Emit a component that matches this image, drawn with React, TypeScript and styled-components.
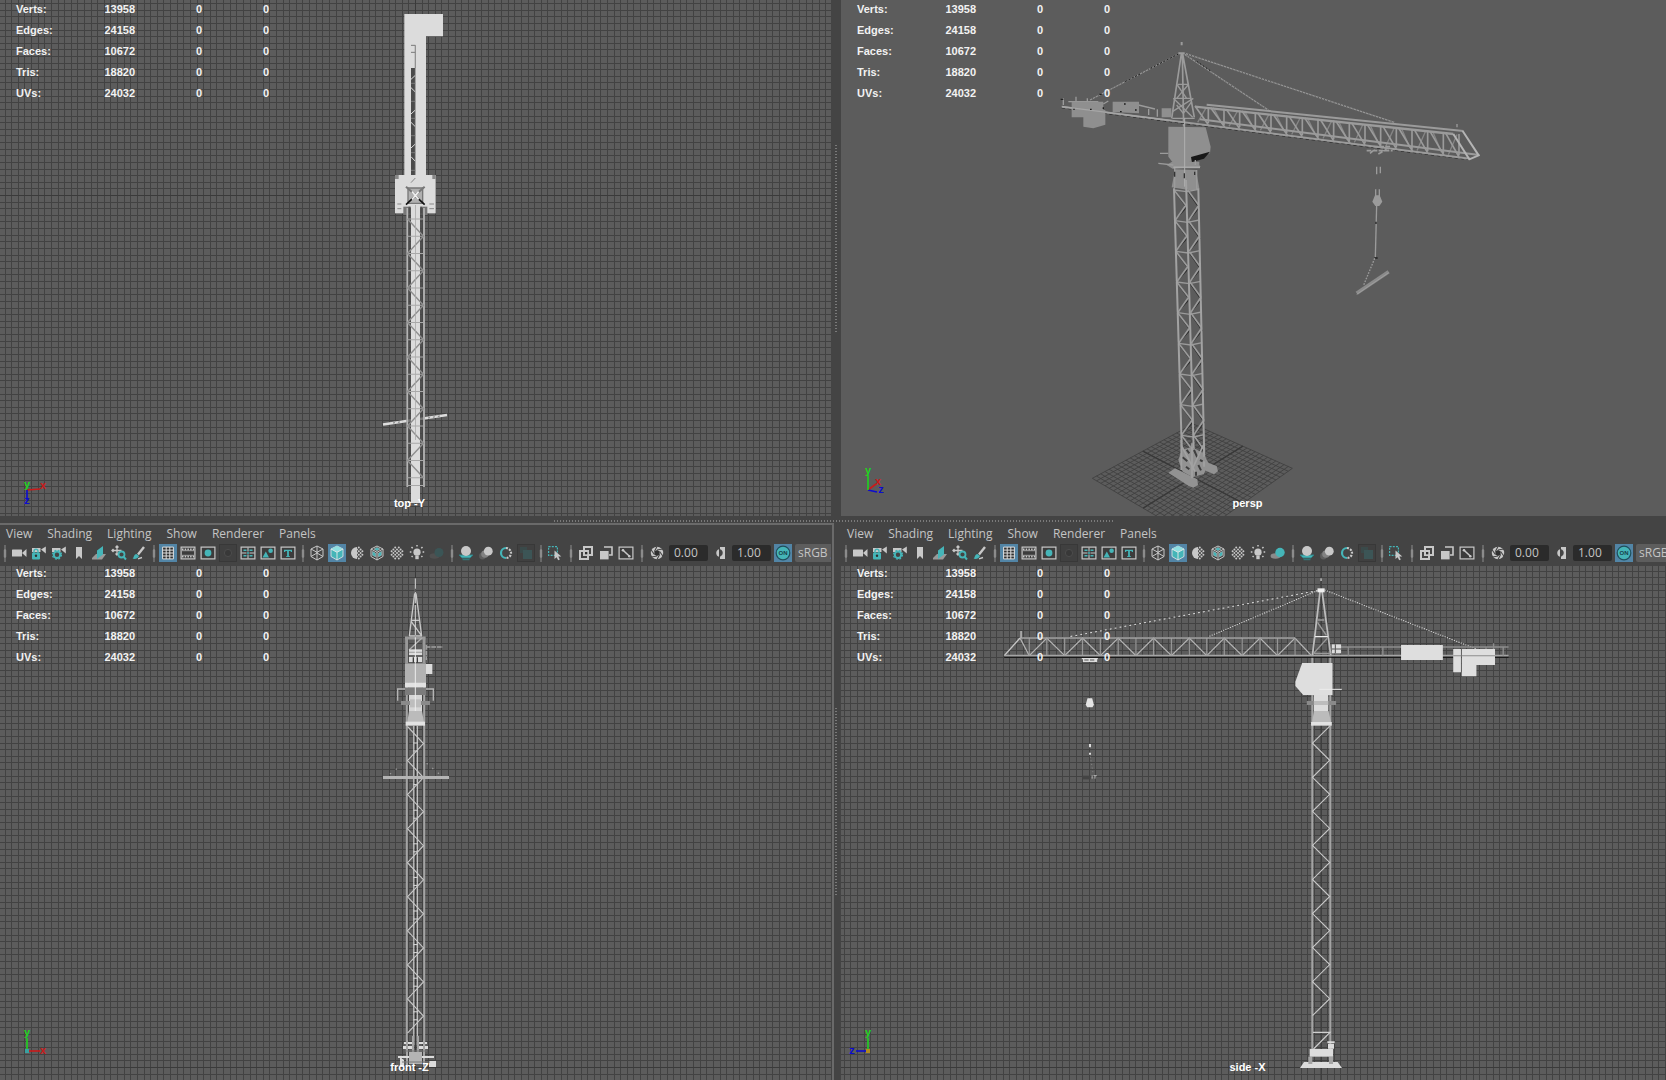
import React from "react";
import styled, { createGlobalStyle } from "styled-components";

const GlobalStyle = createGlobalStyle`
  * { box-sizing: border-box; }
  body { margin: 0; background: #444; overflow: hidden; }
`;

const uiFont = `"Open Sans", "Noto Sans", sans-serif`;
const hudFont = `"Liberation Sans", Arial, sans-serif`;

const Workspace = styled.main`
  display: grid;
  height: 100vh;
  grid-template-columns: 834fr 7px 825fr;
  grid-template-rows: 516fr 7px 557fr;
  background: #444;
`;
const Panel = styled.section<{ $active?: boolean; $bare?: boolean; $inset?: boolean }>`
  display: flex;
  flex-direction: column;
  min-width: 0;
  min-height: 0;
  overflow: hidden;
  border-top: ${(p) => (p.$bare ? "0" : "2px")} solid ${(p) => (p.$active ? "#6a6a6a" : "transparent")};
  border-right: ${(p) => (p.$inset ? "2px" : "0")} solid ${(p) => (p.$active ? "#6a6a6a" : "transparent")};
  padding-right: ${(p) => (p.$inset ? "1px" : "0")};
`;
const RowSplitter = styled.div`
  grid-column: 1 / -1;
  display: flex;
  align-items: center;
  justify-content: center;
  padding: 2px 0 0 2px;
`;
const RowDots = styled.div`
  width: 560px;
  height: 2px;
  background: repeating-linear-gradient(90deg, #7a7a7a 0 1px, transparent 1px 3px);
`;
const ColumnSplitter = styled.div<{ $raised?: boolean }>`
  display: flex;
  align-items: center;
  padding-left: 1px;
  padding-bottom: ${(p) => (p.$raised ? "38px" : "0")};
`;
const ColumnDots = styled.div`
  width: 2px;
  height: 188px;
  background: repeating-linear-gradient(180deg, #7a7a7a 0 1px, transparent 1px 3px);
`;
const MenuBar = styled.nav`
  display: flex;
  flex: none;
  gap: 15px;
  height: 18px;
  padding-left: 6px;
`;
const MenuButton = styled.button`
  border: 0;
  padding: 0;
  background: none;
  color: #c4c4c4;
  font: 12px/18px ${uiFont};
`;
const ToolRow = styled.div`
  display: flex;
  flex: none;
  align-items: center;
  height: 23px;
  padding-bottom: 3px;
  overflow: hidden;
`;
const Divider = styled.span<{ $wide?: boolean }>`
  flex: none;
  display: flex;
  justify-content: center;
  width: ${(p) => (p.$wide ? "11px" : "9px")};
`;
const ToolButton = styled.button<{ $on?: boolean; $off?: boolean }>`
  flex: none;
  display: grid;
  place-items: center;
  width: 18px;
  height: 18px;
  margin: 0 1px;
  padding: 0;
  border: ${(p) => (p.$off ? "1px solid #383838" : "0")};
  background: ${(p) => (p.$on ? "#5285a6" : p.$off ? "#404040" : "none")};
`;
const NumberBox = styled.input`
  flex: none;
  width: 39px;
  height: 16px;
  margin: 0 2px;
  padding: 0 5px;
  border: 0;
  border-radius: 2px;
  background: #2b2b2b;
  color: #c4c4c4;
  font: 12px/16px ${uiFont};
`;
const ColorSpace = styled.select`
  appearance: none;
  flex: none;
  width: 120px;
  height: 18px;
  margin-left: 2px;
  padding: 0 3px;
  border: 0;
  border-radius: 2px;
  background: #5d5d5d;
  color: #c4c4c4;
  font: 12px/18px ${uiFont};
`;
const Viewport = styled.div`
  position: relative;
  flex: 1;
  min-height: 0;
  overflow: hidden;
  background: #5c5c5c;
`;
const Scene = styled.svg`
  display: block;
  width: 100%;
  height: 100%;
`;
const Stats = styled.table<{ $raised?: boolean }>`
  position: absolute;
  top: ${(p) => (p.$raised ? "-3px" : "-1px")};
  left: 16px;
  height: 104px;
  border-collapse: collapse;
  color: #f2f2f2;
  font: bold 11px/12px ${hudFont};
  th, td { padding: 0; vertical-align: middle; }
  th { width: 52px; text-align: left; }
  td { width: 67px; text-align: right; }
`;
const CameraName = styled.div`
  position: absolute;
  left: 0;
  right: 12px;
  bottom: 7px;
  text-align: center;
  color: #fff;
  font: bold 11px/12px ${hudFont};
`;

/* ---------- toolbar icons ---------- */

const L = "#c8c8c8";
const T = "#45b5b8";
const D = "#2f2f2f";

const Camera = ({ x = 0, y = 0, k = 1 }) => (
  <g transform={`translate(${x} ${y}) scale(${k})`} fill={L}>
    <rect x="0" y="5" width="10" height="7" rx="0.6" />
    <path d="M10 8.5L14.5 4.5V12.5Z" />
  </g>
);
const Frame = ({ children }: { children?: React.ReactNode }) => (
  <g>
    <rect x="1.1" y="2.1" width="13.8" height="11.8" fill="#3c3c3c" stroke={L} strokeWidth="1.2" />
    {children}
  </g>
);
const checker = (r: number, from: number) => {
  const out: React.ReactNode[] = [];
  for (let i = -3; i <= 3; i++)
    for (let j = -3; j <= 3; j++)
      if ((i + j) % 2 === 0 && i * 1.8 >= from && Math.hypot(i, j) * 1.8 < r)
        out.push(<circle key={`${i},${j}`} cx={8 + i * 1.8} cy={8 + j * 1.8} r="1" fill={L} />);
  return out;
};
const cubePath = "M8 1L14 4V11.5L8 15L2 11.5V4Z";
const cubeEdges = "M2 4L8 7.3L14 4M8 7.3V15";

const icons: Record<string, React.ReactNode> = {
  "Select camera": <Camera x={1} y={-0.5} />,
  "Lock camera": (
    <g>
      <path d="M1 3H9.5V7H1Z" fill={L} /><path d="M10 4.5L14.8 1.5V8.5Z" fill={L} />
      <rect x="1" y="7.5" width="8" height="7" rx="1" fill={T} />
      <path d="M3 8V6.3a2 2 0 0 1 4 0V8" fill="none" stroke={T} strokeWidth="1.4" />
      <circle cx="5" cy="10.8" r="1.2" fill={D} />
    </g>
  ),
  "Camera attributes": (
    <g>
      <path d="M1 3H9.5V7H1Z" fill={L} /><path d="M10 4.5L14.8 1.5V8.5Z" fill={L} />
      <circle cx="6" cy="9.8" r="3.2" fill="#444" stroke={T} strokeWidth="2" />
      <circle cx="6" cy="9.8" r="4.5" fill="none" stroke={T} strokeWidth="1.2" strokeDasharray="1.8 1.8" />
    </g>
  ),
  Bookmarks: <path d="M5 2H11V14L8 11L5 14Z" fill={L} />,
  "Image plane": (
    <g><path d="M1 13L5 9H15L11 14.5H1Z" fill="#999" /><path d="M6 5.5L12 1V9.5L6 14Z" fill={T} /></g>
  ),
  "Pan and zoom": (
    <g><path d="M6 1V10M1 5.5H10.5M4.5 2.5L6 1L7.5 2.5M2.5 4L1 5.5L2.5 7M4.5 8.5L6 10L7.5 8.5" fill="none" stroke={L} strokeWidth="1.3" /><circle cx="10.5" cy="9.5" r="3" fill="#444" stroke={T} strokeWidth="1.8" /><path d="M12.8 12L15 14.5" stroke={T} strokeWidth="2" /></g>
  ),
  "Grease pencil": (
    <g><path d="M13 2L7 9.5" stroke={L} strokeWidth="2.4" /><path d="M1.5 13.5C3 13 2.5 9.5 5.5 9L8 11C7 13.5 4 14.5 1.5 13.5Z" fill={T} /><path d="M7 13.8L11 12.5" stroke={L} strokeWidth="1.4" /></g>
  ),
  Grid: (
    <path d="M2.6 2.1H13.4V13.9H2.6ZM6.2 2V14M9.8 2V14M2.5 5.1H13.5M2.5 8H13.5M2.5 11H13.5" fill={D} stroke="#dedede" strokeWidth="1" />
  ),
  "Film gate": (
    <Frame><path d="M2 4.3H14M2 11.7H14" stroke={L} strokeWidth="1.7" strokeDasharray="1.5 1.2" /><path d="M2 5.7H14M2 10.3H14" stroke={L} strokeWidth="0.7" /></Frame>
  ),
  "Resolution gate": <Frame><circle cx="8" cy="8" r="3.4" fill={T} /></Frame>,
  "Gate mask": <circle cx="8" cy="8" r="3.6" fill="#383838" stroke="#4c4c4c" />,
  "Field chart": (
    <Frame><path d="M8 2.5V6.5M8 9.5V13.5M1.5 8H6.5M9.5 8H14.5" stroke={L} strokeWidth="1.1" /><path d="M3.5 5.2H6.5M9.5 5.2H12.5M3.5 10.8H6.5M9.5 10.8H12.5M7 8H9" stroke={T} strokeWidth="1.5" /></Frame>
  ),
  "Safe action": (
    <Frame><circle cx="10.6" cy="5.8" r="2.3" fill={T} /><path d="M2.5 12.5L5.8 6.5L9 12.5Z" fill={T} /></Frame>
  ),
  "Safe title": (
    <Frame><path d="M4 4.7H12V7H11L10.4 6.1H8.9V11.2H10V12H6V11.2H7.1V6.1H5.6L5 7H4Z" fill={T} /></Frame>
  ),
  Wireframe: <path d={`${cubePath}${cubeEdges}M2 11.5L8 8M14 11.5L8 8M8 1V8`} fill="none" stroke={L} strokeWidth="1" />,
  Shaded: (
    <g><path d={cubePath} fill={T} stroke="#e8e8e8" strokeWidth="0.8" /><path d="M2 4L8 7.3L14 4L8 1Z" fill="#8fe0e2" /><path d={cubeEdges} fill="none" stroke="#e8e8e8" strokeWidth="0.9" /></g>
  ),
  "Default material": (
    <g><path d="M8 2A6 6 0 0 0 8 14Z" fill={L} />{checker(6.4, 0)}</g>
  ),
  "Wireframe on shaded": (
    <g><path d={`${cubePath}${cubeEdges}`} fill="#3c3c3c" stroke={L} strokeWidth="1" /><path d="M5 4L8 2.4L11 4L8 5.7ZM3.4 6.3L6.7 8.2V12L3.4 10.3ZM12.6 6.3L9.3 8.2V12L12.6 10.3Z" fill={T} stroke={L} strokeWidth="0.5" /></g>
  ),
  Textured: <g>{checker(6.6, -9)}</g>,
  "All lights": (
    <g fill={L}><circle cx="8" cy="7.2" r="3.6" /><rect x="6.3" y="10.6" width="3.4" height="3.6" /><path d="M8 0V1.6M.8 7H2.4M13.6 7H15.2M2.5 2L3.7 3.2M13.5 2L12.3 3.2M2.6 12L3.6 11M13.4 12L12.4 11" stroke={L} strokeWidth="1.5" /></g>
  ),
  Shadows: (
    <g><ellipse cx="5.5" cy="11" rx="5" ry="2.8" fill="#8a8a8a" /><circle cx="10" cy="7.5" r="4.7" fill={T} /></g>
  ),
  "Ambient occlusion": (
    <g><path d="M1 10H15L12 13H4ZM4.5 14.7H11.5" fill={T} stroke="#307f82" strokeWidth="1" /><circle cx="8" cy="6" r="5" fill={L} /></g>
  ),
  "Motion blur": (
    <g><circle cx="4.5" cy="11" r="3.4" fill="#5e5e5e" /><circle cx="7" cy="9" r="3.8" fill="#828282" /><circle cx="10.3" cy="6.2" r="4.4" fill={L} /></g>
  ),
  "Anti-aliasing": (
    <g fill="none" strokeWidth="2.2"><path d="M8 3A5 5 0 0 0 8 13" stroke={T} /><path d="M8 3A5 5 0 0 1 8 13" stroke={L} strokeDasharray="2 1.2" /></g>
  ),
  "Depth of field": (
    <g><rect x="2" y="2" width="7" height="6" fill="#3a4a4a" /><rect x="5" y="5" width="9" height="9" fill="#3c5556" /></g>
  ),
  "Isolate select": (
    <g><rect x="1.6" y="1.6" width="8.8" height="8.8" fill="none" stroke={T} strokeWidth="1.2" strokeDasharray="2 1.2" /><path d="M7.5 5.5V14L9.6 12.2L11.2 15.3L12.8 14.5L11.3 11.6H14.3Z" fill={L} /></g>
  ),
  "X-ray": (
    <g><path d="M2 6H10V14H2ZM6 2H14V10H6Z" fill="none" stroke={L} strokeWidth="2" /><rect x="7" y="7" width="2.3" height="2.3" fill={D} /></g>
  ),
  "X-ray joints": (
    <g><path d="M6 2H14V10H11" fill="none" stroke={L} strokeWidth="1.6" /><rect x="2" y="6" width="8.6" height="8.4" fill={L} /></g>
  ),
  "X-ray components": (
    <Frame><path d="M4.5 4.8L11.5 11.3" stroke={L} strokeWidth="1.5" /><circle cx="5" cy="5.2" r="1.3" fill={L} /><circle cx="11.3" cy="11.2" r="1.3" fill={L} /></Frame>
  ),
  Exposure: (
    <g><circle cx="8" cy="8" r="6.2" fill={L} /><path d="M8 5L13.5 4M10.6 6.5L13.8 11M10.6 9.5L8 14.5M8 11L2.5 12M5.4 9.5L2.2 5M5.4 6.5L8 1.5" stroke="#444" strokeWidth="1.1" /><path d="M8 5L10.6 6.5V9.5L8 11L5.4 9.5V6.5Z" fill={D} /></g>
  ),
  Contrast: (
    <g><path d="M7 4.2A4 4 0 0 0 7 11.8Z" fill={L} /><path d="M8 2H13V14H8V11.8A4 4 0 0 0 8 4.2Z" fill={L} /></g>
  ),
};

const dimShadow = (
  <g><ellipse cx="5.5" cy="11" rx="5" ry="2.8" fill="#505050" /><circle cx="10" cy="7.5" r="4.5" fill="#3b5556" /></g>
);

const Icon = ({ children }: { children: React.ReactNode }) => (
  <svg width="16" height="16" viewBox="0 0 16 16" aria-hidden="true">{children}</svg>
);
const Separator = ({ wide }: { wide?: boolean }) => (
  <Divider $wide={wide}>
    <svg width="4" height="17" viewBox="0 0 4 17" aria-hidden="true">
      <path d="M1.5 0H2.5V4L3.2 5V12L2.5 13V17H1.5V13L.8 12V5L1.5 4Z" fill="#8c8c8c" />
    </svg>
  </Divider>
);

const groups: { wide?: boolean; names: string[] }[] = [
  { names: ["Select camera", "Lock camera", "Camera attributes", "Bookmarks", "Image plane", "Pan and zoom", "Grease pencil"] },
  { names: ["Grid", "Film gate", "Resolution gate", "Gate mask", "Field chart", "Safe action", "Safe title"] },
  { names: ["Wireframe", "Shaded", "Default material", "Wireframe on shaded", "Textured", "All lights", "Shadows"] },
  { names: ["Ambient occlusion", "Motion blur", "Anti-aliasing", "Depth of field"] },
  { names: ["Isolate select"] },
  { wide: true, names: ["X-ray", "X-ray joints", "X-ray components"] },
  { wide: true, names: ["Exposure"] },
];

const PanelHeader = ({ shadows }: { shadows?: boolean }) => (
  <>
    <MenuBar>
      {["View", "Shading", "Lighting", "Show", "Renderer", "Panels"].map((m) => (
        <MenuButton key={m}>{m}</MenuButton>
      ))}
    </MenuBar>
    <ToolRow>
      {groups.map((g, i) => (
        <React.Fragment key={i}>
          <Separator wide={g.wide} />
          {g.names.map((n) => (
            <ToolButton key={n} aria-label={n} $on={n === "Grid" || n === "Shaded"} $off={n === "Gate mask" || n === "Depth of field"}>
              <Icon>{n === "Shadows" && !shadows ? dimShadow : icons[n]}</Icon>
            </ToolButton>
          ))}
        </React.Fragment>
      ))}
      <NumberBox aria-label="Exposure value" defaultValue="0.00" />
      <ToolButton aria-label="Contrast"><Icon>{icons.Contrast}</Icon></ToolButton>
      <NumberBox aria-label="Gamma value" defaultValue="1.00" />
      <ToolButton aria-label="View transform" $on>
        <Icon>
          <circle cx="8" cy="8" r="6.8" fill={T} stroke="#1f4f5c" strokeWidth="1.2" />
          <text x="8" y="10.3" textAnchor="middle" fontSize="6" fontWeight="bold" fontFamily="Liberation Sans, sans-serif" fill="#173f4a">ON</text>
        </Icon>
      </ToolButton>
      <ColorSpace aria-label="Color space"><option>sRGB gamma</option></ColorSpace>
    </ToolRow>
  </>
);

const counts: [string, number][] = [["Verts", 13958], ["Edges", 24158], ["Faces", 10672], ["Tris", 18820], ["UVs", 24032]];
const PolyCount = ({ raised }: { raised?: boolean }) => (
  <Stats $raised={raised}>
    <tbody>
      {counts.map(([name, n]) => (
        <tr key={name}><th scope="row">{name}:</th><td>{n}</td><td>0</td><td>0</td></tr>
      ))}
    </tbody>
  </Stats>
);

/* ---------- scene drawing ---------- */

const PITCH = 6.62;
type Box = { x: number; y: number; w: number; h: number; cx: number; cy: number };
const OrthoGrid = ({ x, y, w, h, cx, cy }: Box) => {
  let d = "";
  for (let k = Math.ceil((x - cx) / PITCH); cx + k * PITCH < x + w; k++) d += `M${cx + k * PITCH} ${y}v${h}`;
  for (let k = Math.ceil((y - cy) / PITCH); cy + k * PITCH < y + h; k++) d += `M${x} ${cy + k * PITCH}h${w}`;
  return (
    <g fill="none">
      <path d={d} stroke="#424242" strokeWidth="1" shapeRendering="crispEdges" />
      <path d={`M${cx} ${y}v${h}M${x} ${cy}h${w}`} stroke="#3a3a3a" strokeWidth="1" />
    </g>
  );
};

const zigzag = (left: number, right: number, y0: number, y1: number, step: number, startLeft = true) => {
  let d = "";
  let onLeft = startLeft;
  for (let y = y0; y <= y1; y += step) {
    d += `${d ? "L" : "M"}${onLeft ? left : right} ${y}`;
    onLeft = !onLeft;
  }
  return d;
};

type Arm = { name: string; color: string; dx: number; dy: number; lx: number; ly: number };
const Gizmo = ({ x, y, arms }: { x: number; y: number; arms: Arm[] }) => (
  <g fontFamily="Liberation Sans, sans-serif" fontWeight="bold" fontSize="11" textAnchor="middle">
    {arms.map((a) => (
      <g key={a.name}>
        <path d={`M${x} ${y}l${a.dx} ${a.dy}`} stroke={a.color} strokeWidth="1.6" />
        <text x={x + a.lx} y={y + a.ly} fill={a.color}>{a.name}</text>
      </g>
    ))}
  </g>
);
const RED = "#cc1a1a";
const GREEN = "#1fd41f";
const BLUE = "#0c0cd0";
const W = "#dcdcdc";
const G = "#a4a4a4";

const TopScene = () => {
  let rungs = "";
  for (let y = 219; y < 480; y += 17.25) rungs += `M407 ${y}H424`;
  return (
    <Scene viewBox="0 0 831 516" preserveAspectRatio="xMidYMid slice">
      <OrthoGrid x={0} y={0} w={831} h={516} cx={415.5} cy={195.5} />
      <path d="M383 424.5L447 415" stroke={W} strokeWidth="2.6" />
      <path d="M393 423l10-1.5M428 418l12-2" stroke="#777" strokeWidth="1" strokeDasharray="2 3" />
      <g transform="scale(.33333)">
        <g transform="translate(1080 0)">
          <path d="M133 42H249V109H198V525H133Z" fill={W} />
          <rect x="153" y="204" width="13" height="321" fill="#4b4b4b" />
          <path d="M153 136H166V204M153 157H166M153 250H166M153 304H166M153 355H166M153 407H166M153 458H166M153 511H166" stroke="#777" strokeWidth="3" fill="none" />
          <path d="M153 238L166 226M153 263L166 276M153 342L166 330M153 367L166 380M153 444L166 432M153 470L166 484" stroke={W} strokeWidth="3" />
          <path d="M166 136V560" stroke="#999" strokeWidth="2" />
          <rect x="105" y="525" width="122" height="115" fill={W} />
          <path d="M105 525H116V537H105ZM217 525H227V537H217Z" fill="#888" />
          <path d="M130 620H202V645H130Z" fill="#777" />
          <path d="M153 548L166 534M112 612H124M112 626H124M208 612H222M208 626H222" stroke="#888" strokeWidth="3" />
          <path d="M144 564H188V610H144Z" fill="#b0b0b0" stroke="#777" strokeWidth="4" />
          <path d="M138 560L166 585L194 560" stroke="#777" strokeWidth="6" fill="none" />
          <path d="M138 614L166 588L194 614" stroke="#111" strokeWidth="5" fill="none" />
          <path d="M156 575L176 598M176 575L156 598" stroke="#eee" strokeWidth="5" />
          <path d="M148 640V620M184 640V620" stroke="#555" strokeWidth="5" />
        </g>
      </g>
      <path d="M406.5 208H424.5V487H406.5Z" fill="#4a4a4a" opacity=".7" />
      <path d="M411 205H420V502H411Z" fill={W} />
      <path d="M407.3 208V487M424 208V487" stroke="#b4b4b4" strokeWidth="1.8" />
      <path d={rungs + "M407 485.5H424"} stroke="#a8a8a8" strokeWidth="1" />
      <path d={zigzag(407.5, 423.5, 219, 479, 17.25)} stroke="#8f8f8f" strokeWidth="1.4" fill="none" />
      <path d="M415.5 205V440" stroke="#aaa" strokeWidth=".8" />
      <path d="M408 502.5H423" stroke={W} />
      <Gizmo x={27} y={490} arms={[
        { name: "x", color: RED, dx: 13, dy: -1, lx: 16, ly: -1 },
        { name: "z", color: BLUE, dx: 0, dy: 10, lx: 0, ly: 14 },
        { name: "y", color: GREEN, dx: 0, dy: 0, lx: 0, ly: -2 },
      ]} />
    </Scene>
  );
};

const lerp = (a: number[], b: number[], t: number) => [a[0] + (b[0] - a[0]) * t, a[1] + (b[1] - a[1]) * t];

const FloorGrid = () => {
  const top = [400, 72], right = [697, 205], bottom = [402, 414], left = [97, 235];
  const n = 24;
  let d = "";
  for (let i = 0; i <= n; i++) {
    const t = i / n;
    const a = lerp(top, right, t), b = lerp(left, bottom, t);
    const c = lerp(top, left, t), e = lerp(right, bottom, t);
    d += `M${a}L${b}M${c}L${e}`;
  }
  return (
    <g transform="translate(1060 400) scale(.33333)" fill="none">
      <path d={d} stroke="#404040" strokeWidth="2.6" />
      <path d={`M${lerp(top, right, 0.5)}L${lerp(left, bottom, 0.5)}M${lerp(top, left, 0.5)}L${lerp(right, bottom, 0.5)}`} stroke="#383838" strokeWidth="4" />
    </g>
  );
};

const PerspScene = () => {
  const P = "#9b9b9b";
  const leg = (x0: number, x1: number, y: number) => x0 + ((x1 - x0) * (y - 480)) / 830;
  let web = "", shade = "", rungs = "";
  let side = true;
  for (let y = 480; y < 1290; y += 46) {
    const a = side ? [leg(402, 427, y), leg(436, 461, y + 46)] : [leg(436, 461, y), leg(402, 427, y + 46)];
    const b = side ? [leg(443, 463, y), leg(475, 495, y + 46)] : [leg(475, 495, y), leg(443, 463, y + 46)];
    web += `M${a[0]} ${y}L${a[1]} ${y + 46}M${b[0]} ${y}L${b[1]} ${y + 46}`;
    shade += `M${a[0] + 3} ${y + 5}L${a[1] - 2} ${y + 46}M${b[0] + 2} ${y + 6}L${b[1] - 2} ${y + 48}`;
    if (side) rungs += `M${leg(402, 427, y)} ${y}L${leg(440, 463, y)} ${y + 5}L${leg(476, 495, y)} ${y - 2}`;
    side = !side;
  }
  let jib = "", back = "";
  for (let i = 0; i < 17; i++) {
    const x = 465 + i * 47;
    const topY = 228 + (x - 465) * 0.108, botY = 281 + (x - 465) * 0.129;
    jib += `M${x + 40} ${topY + 3}V${botY - 2}`;
    jib += i % 2 ? `M${x} ${topY}L${x + 42} ${botY + 4}` : `M${x} ${topY}L${x + 40} ${botY + 3}`;
    back += i % 2 ? `M${x + 8} ${topY}L${x + 34} ${botY - 6}` : `M${x + 8} ${botY - 4}L${x + 34} ${topY + 4}`;
  }
  return (
    <Scene viewBox="841 0 825 516" preserveAspectRatio="xMidYMid slice">
      <FloorGrid />
      <g transform="translate(1040 30) scale(.33333)" fill="none" stroke={P} strokeWidth="4">
        <path d="M415 72L150 210M432 72L685 240M435 70L1065 278" stroke="#969696" strokeWidth="3.5" />
        <path d="M415 72L150 210M432 72L685 240M435 70L1065 278" stroke="#333" strokeWidth="3" strokeDasharray="2 8" />
        <path d="M415 72L330 116M300 132L255 155M470 94L515 125" stroke="#1c1c1c" strokeWidth="3" strokeDasharray="6 5" />
        <path d="M425 36V46M415 70H434" strokeWidth="6" />
        <path d="M424 72L395 265M428 72L463 262M427 72L431 290" strokeWidth="5" />
        <path d="M412 163H446M405 205H452M397 245L460 205M400 205L458 262M397 265H464M410 225L430 250L455 215M412 165L440 205M444 165L410 205" />
        <path d={back} stroke="#868686" strokeWidth="4" />
        <path d={jib} strokeWidth="5" />
        <path d="M500 224L1270 303M480 268L1318 375" strokeWidth="6" />
        <path d="M465 230L1240 312" strokeWidth="7" />
        <path d="M65 233L1290 389" stroke="#222" strokeWidth="4" strokeDasharray="10 8" />
        <path d="M65 230L1290 386" strokeWidth="6" />
        <path d="M1240 312L1288 388L1316 376L1268 303" stroke="#b4b4b4" strokeWidth="6" />
        <path d="M70 225V205M108 200V215M142 205V215M85 215H175M190 222L205 213M295 225L345 237M326 237V255M352 238V260M1251 282V292" strokeWidth="4" />
        <path d="M62 208H70M178 193H185M255 222H262" stroke="#222" />
        <g fill="#8f8f8f" stroke="none">
          <path d="M95 215H190V262H95ZM130 240H196V284L160 295L130 290ZM218 215H297V250L218 246ZM365 235H394V262H365Z" />
          <path d="M385 290L497 292L512 350L510 370L455 385L455 395L400 400L385 380Z" />
          <path d="M396 395H478V405L482 411L398 416L380 405Z" />
          <path d="M405 418L468 420L478 475L460 482L395 472Z" />
        </g>
        <path d="M66 230L395 272" stroke="#a6a6a6" strokeWidth="4" />
        <path d="M100 238h4M150 238h5M190 232v5M252 222h5M285 240h5M240 245h5" stroke="#1c1c1c" strokeWidth="4" />
        <path d="M453 381L510 365L492 386L456 396Z" fill="#181818" stroke="none" />
        <path d="M355 400L400 405M360 370H385M404 410V475M470 420V480M466 405V390" />
        <path d="M400 412L480 412" stroke="#a8a8a8" strokeWidth="5" />
        <path d="M434 265V470" stroke="#b0b0b0" strokeWidth="3" />
        <path d="M404 425V440M433 430V445M464 425V435" stroke="#333" />
        <path d={shade} stroke="#2c2c2c" strokeWidth="4" />
        <path d={rungs} strokeWidth="4" />
        <path d={web} strokeWidth="5" />
        <path d="M402 475L427 1310M438 450L463 1325M475 475L493 1290" stroke="#a2a2a2" strokeWidth="6" />
        <path d="M980 362H1058M990 370L1005 358M1015 372L1040 358M1000 350H1050" strokeWidth="5" strokeDasharray="14 4" />
        <path d="M1010 410V433M1021 410V430M1007 478V498M1018 478V498" />
        <path d="M1005 496H1019L1027 515L1018 528H1006L997 515Z" fill={P} stroke="none" />
        <path d="M1010 525L1006 682" />
        <path d="M1008 575V582M1003 684H1013" stroke="#222" />
        <path d="M1004 685L970 768" strokeDasharray="5 4" strokeWidth="4" />
        <path d="M950 790L1046 725" stroke="#8b8b8b" strokeWidth="11" />
        <path d="M950 793L1046 728" stroke="#a6a6a6" strokeWidth="2" />
      </g>
      <g transform="translate(1060 400) scale(.33333)" fill="#929292">
        <path d="M325 218L345 205L412 238L414 255L400 263L385 257Z" />
        <path d="M425 175L448 190L470 198L474 214L462 223L432 210Z" />
        <path d="M365 150L395 140L430 160L445 188L432 222L398 232L368 215L355 180Z" />
        <path d="M368 172l14 12M402 150l10 22M415 195l8 16M378 200l10 8M432 170v14M408 215v12M380 150l8 10M420 180l8 4" stroke="#3f3f3f" strokeWidth="6" />
        <path d="M366 140L405 215M430 135L398 205M396 130V235M432 130V200M364 120V210" stroke="#a2a2a2" strokeWidth="5" />
      </g>
      <Gizmo x={868} y={490} arms={[
        { name: "x", color: RED, dx: 8, dy: -6, lx: 10, ly: -5 },
        { name: "z", color: BLUE, dx: 9, dy: 2, lx: 13, ly: 3 },
        { name: "y", color: GREEN, dx: 0, dy: -15, lx: 0, ly: -16 },
      ]} />
    </Scene>
  );
};

const FrontScene = () => {
  let rungs = "";
  for (let y = 743; y < 1040; y += 33.6) rungs += `M413.5 ${y + 8}H417.5M413.5 ${y}H417.5`;
  return (
    <Scene viewBox="0 566 831 514" preserveAspectRatio="xMidYMid slice">
      <OrthoGrid x={0} y={566} w={831} h={514} cx={415.5} cy={1067.5} />
      <path d="M406.8 687V1050M424.2 687V1050" stroke={G} strokeWidth="2" />
      <path d="M413.8 726V1045M417.3 726V1045" stroke={W} strokeWidth="1" />
      <path d={rungs} stroke={W} />
      <path d={zigzag(407.5, 423.5, 726.5, 1046, 17.03)} stroke="#c8c8c8" strokeWidth="1.1" fill="none" />
      <g transform="translate(360 570) scale(.33333)" fill="none">
        <path d="M166 25V100" stroke={W} strokeWidth="3" />
        <path d="M166 56V66" stroke="#555" strokeWidth="4" />
        <path d="M164 70L148 198M168 70L185 198M155 151H177M148 198H186M154 155L184 196" stroke="#c8c8c8" strokeWidth="4" />
        <path d="M166 105V195" stroke={W} strokeWidth="3" />
        <path d="M140 202V280M192 202V280M135 204H197" stroke="#999" strokeWidth="9" />
        <path d="M147 240L185 205" stroke="#b0b0b0" strokeWidth="4" />
        <path d="M147 238H186V276H147Z" fill={W} />
        <path d="M145 258H188M160 262V278M172 262V278" stroke="#3c3c3c" strokeWidth="4" />
        <path d="M147 247H186" stroke="#aaa" strokeWidth="4" />
        <path d="M166 202V280" stroke="#ececec" strokeWidth="3" />
        <path d="M197 231H249M199 225V270" stroke="#a0a0a0" strokeWidth="4" strokeDasharray="14 3" />
        <rect x="135" y="280" width="63" height="57" fill="#b2b2b2" />
        <rect x="135" y="337" width="63" height="16" fill="#e2e2e2" />
        <rect x="198" y="282" width="19" height="30" fill={W} />
        <rect x="135" y="353" width="63" height="22" fill="#7c7c7c" />
        <path d="M135 357H113V392M198 357H220V392" stroke="#b4b4b4" strokeWidth="4" />
        <rect x="147" y="375" width="39" height="48" fill="#d6d6d6" />
        <rect x="123" y="393" width="87" height="12" fill="#8a8a8a" />
        <rect x="150" y="388" width="33" height="24" fill="#bdbdbd" />
        <path d="M166 280V440" stroke="#ececec" strokeWidth="3" />
        <path d="M147 423H186L192 456H142Z" fill="#bbb" />
        <rect x="137" y="455" width="58" height="12" fill="#e2e2e2" />
        <path d="M90 612L126 584M200 580L238 612" stroke="#999" strokeWidth="4" strokeDasharray="4 18" />
        <rect x="69" y="618" width="198" height="9" fill="#b4b4b4" />
      </g>
      <g>
        <path d="M404 1042H412V1044H404ZM418 1042H427V1044H418ZM403 1046H412V1049H403ZM419 1046H428V1049H419Z" fill={W} />
        <path d="M407 1040V1067M424 1040V1067M413 1036V1060M418 1036V1060" stroke={G} strokeWidth="2" />
        <path d="M398 1056H434V1058H398Z" fill={W} />
        <path d="M409 1052H422V1064H409Z" fill="#b4b4b4" />
        <path d="M400 1057V1067H404V1060ZM429 1061H436V1067H429Z" fill={W} />
        <path d="M405 1051H427M402 1062H430" stroke="#777" strokeWidth="1" />
      </g>
      <Gizmo x={27} y={1051} arms={[
        { name: "x", color: RED, dx: 13, dy: 0, lx: 16, ly: 3 },
        { name: "y", color: GREEN, dx: 0, dy: -13, lx: 0, ly: -15 },
      ]} />
      <rect x="25" y="1049" width="4" height="4" fill="#3aa0a0" />
    </Scene>
  );
};

const SideScene = () => {
  const tops = [187, 287, 387, 486, 586, 684, 784, 882];
  let diag = "M112 204L138 257", vert = "M138 204V257";
  tops.forEach((x, i) => {
    const prev = i === 0 ? 138 : (tops[i - 1] + x) / 2;
    const next = i === tops.length - 1 ? 928 : (x + tops[i + 1]) / 2;
    diag += `M${prev} 257L${x} 204L${next} 257`;
    vert += `M${x} 204V257` + (i < tops.length - 1 ? `M${next} 204V257` : "");
  });
  return (
    <Scene viewBox="841 566 825 514" preserveAspectRatio="xMidYMid slice">
      <OrthoGrid x={841} y={566} w={825} h={514} cx={1321} cy={1067.5} />
      <path d="M1312.3 655V1050M1330.3 655V1050" stroke={G} strokeWidth="2" />
      <path d={zigzag(1312.5, 1329.7, 726.2, 1016, 17.03, false)} stroke="#c8c8c8" strokeWidth="1.1" fill="none" />
      <path d="M1313 1032.3H1330L1313.5 1049" stroke="#cfcfcf" strokeWidth="1.2" fill="none" />
      <g transform="translate(980 570) scale(.35714 .33333)" fill="none">
        <path d="M945 62L250 200" stroke="#e4e4e4" strokeWidth="3" strokeDasharray="5 9" />
        <path d="M945 62L640 200M965 60L1390 237" stroke="#e4e4e4" strokeWidth="3" strokeDasharray="3 4" />
        <path d="M68 261H1480" stroke="#0c0c0c" strokeWidth="4" />
        <path d={diag} stroke="#b4b4b4" strokeWidth="3.5" />
        <path d={vert} stroke="#969696" strokeWidth="3.5" />
        <path d="M68 257L112 204" stroke="#c8c8c8" strokeWidth="4" />
        <path d="M112 204H882M68 257H1480" stroke={G} strokeWidth="5" />
        <path d="M115 183V204M955 25V33" stroke="#aaa" strokeWidth="5" />
        <path d="M1010 231H1480M1031 231V257M1128 231V257M1465 231V257M1438 220V237M1417 231V237" stroke="#8c8c8c" strokeWidth="4" />
        <path d="M955 36V50" stroke="#444" strokeWidth="4" />
        <path d="M952 66L931 255M958 66L982 255" stroke="#bcbcbc" strokeWidth="5" />
        <path d="M945 150H964M945 157L970 196M934 250L972 205M934 250H982" stroke="#999" strokeWidth="4" />
        <path d="M938 200H974" stroke="#eee" strokeWidth="4" />
        <rect x="945" y="55" width="20" height="12" fill="#eee" />
        <rect x="985" y="223" width="26" height="27" fill={W} />
        <path d="M985 237H1011M995 223V250" stroke="#555" strokeWidth="3" />
        <path d="M1179 225H1296V270H1179ZM1325 237H1347V307H1325ZM1349 237H1442V285H1390V319H1349Z" fill="#dedede" />
        <path d="M1325 257H1442" stroke="#8c8c8c" strokeWidth="3" />
        <path d="M1348 237V307" stroke="#555" strokeWidth="2" />
        <rect x="935" y="370" width="40" height="53" fill={W} />
        <path d="M902 279H987V375H905L883 348V335Z" fill="#dedede" />
        <path d="M950 358H1013" stroke="#ececec" strokeWidth="3" />
        <rect x="915" y="393" width="82" height="12" fill="#8a8a8a" />
        <rect x="935" y="393" width="40" height="12" fill="#bdbdbd" />
        <path d="M935 423H976L983 456H930Z" fill="#bbb" />
        <rect x="927" y="456" width="58" height="11" fill="#e2e2e2" />
        <path d="M285 264H330V268H285ZM288 268H328V276H288Z" fill={W} />
        <path d="M292 270H322" stroke="#555" strokeWidth="3" strokeDasharray="12 4" />
        <path d="M301 385H314L319 404L315 412H300L296 404Z" fill="#e4e4e4" />
        <path d="M308 522V532M308 548V554" stroke="#eee" strokeWidth="5" />
        <path d="M309 560L317 612" stroke="#999" strokeWidth="2" strokeDasharray="3 8" />
        <path d="M314 616V626M318 617H327M322 617V626" stroke="#ddd" strokeWidth="2" />
        <rect x="288" y="617" width="22" height="11" fill="#444" />
      </g>
      <g transform="translate(1240 960) scale(.33333)">
        <path d="M192 306H293L306 324H180Z" fill={W} />
        <path d="M205 290H217V312H205ZM267 290H279V312H267Z" fill={G} />
        <path d="M209 267H279V290H209Z" fill={W} />
        <path d="M262 244H284V250H262ZM264 252H282V266H264Z" fill={W} />
      </g>
      <Gizmo x={868} y={1051} arms={[
        { name: "z", color: BLUE, dx: -12, dy: 0, lx: -16, ly: 3 },
        { name: "y", color: GREEN, dx: 0, dy: -13, lx: 0, ly: -15 },
      ]} />
      <rect x="866" y="1049" width="4" height="4" fill="#b08a20" />
    </Scene>
  );
};

export default function App() {
  return (
    <>
      <GlobalStyle />
      <Workspace>
        <Panel $bare $inset>
          <Viewport><TopScene /><PolyCount /><CameraName>top -Y</CameraName></Viewport>
        </Panel>
        <ColumnSplitter $raised><ColumnDots /></ColumnSplitter>
        <Panel $bare>
          <Viewport><PerspScene /><PolyCount /><CameraName>persp</CameraName></Viewport>
        </Panel>
        <RowSplitter><RowDots /></RowSplitter>
        <Panel $active $inset>
          <PanelHeader />
          <Viewport><FrontScene /><PolyCount raised /><CameraName>front -Z</CameraName></Viewport>
        </Panel>
        <ColumnSplitter><ColumnDots /></ColumnSplitter>
        <Panel>
          <PanelHeader shadows />
          <Viewport><SideScene /><PolyCount raised /><CameraName>side -X</CameraName></Viewport>
        </Panel>
      </Workspace>
    </>
  );
}
